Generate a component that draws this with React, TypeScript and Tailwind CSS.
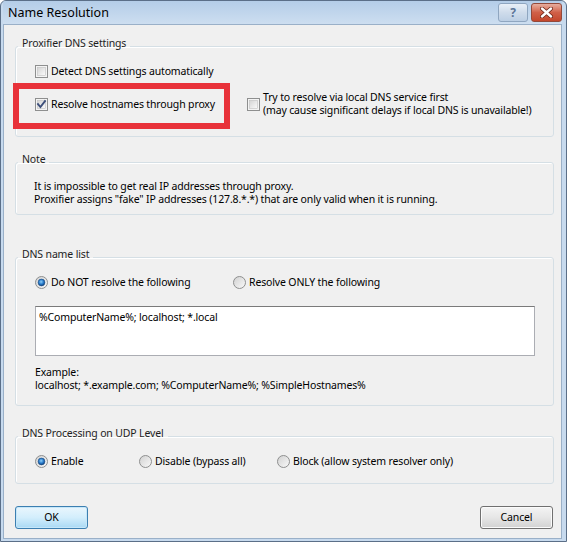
import React from "react";

const font = { fontFamily: '"Noto Sans", "Open Sans", Arial, sans-serif' };

function CheckBox({ checked = false }: { checked?: boolean }) {
  return (
    <svg width="13" height="13" viewBox="0 0 13 13" className="shrink-0">
      <defs>
        <linearGradient id="cbfill" x1="0" y1="0" x2="1" y2="1">
          <stop offset="0" stopColor="#d4d4d4" />
          <stop offset="1" stopColor="#fbfbfb" />
        </linearGradient>
      </defs>
      <rect x="0.5" y="0.5" width="12" height="12" fill="#f4f4f4" stroke="#8e8f8f" />
      <rect x="2.5" y="2.5" width="8" height="8" fill="url(#cbfill)" stroke="#c0c0c0" strokeWidth="0.6" />
      {checked && (
        <path d="M3 6.2 L5.4 9 L10 3.2" fill="none" stroke="#3d4f7a" strokeWidth="1.9" strokeLinecap="square" />
      )}
    </svg>
  );
}

function Radio({ checked = false }: { checked?: boolean }) {
  return (
    <svg width="13" height="13" viewBox="0 0 13 13" className="shrink-0">
      <defs>
        <linearGradient id="rdring" x1="0" y1="0" x2="1" y2="1">
          <stop offset="0" stopColor="#d0d0d0" />
          <stop offset="1" stopColor="#fafafa" />
        </linearGradient>
        <radialGradient id="rddot" cx="0.45" cy="0.4" r="0.6">
          <stop offset="0" stopColor="#8fd0f7" />
          <stop offset="0.55" stopColor="#2c7fcf" />
          <stop offset="1" stopColor="#0d3f7a" />
        </radialGradient>
      </defs>
      <circle cx="6.5" cy="6.5" r="6" fill="url(#rdring)" stroke="#8e8f8f" />
      {checked && <circle cx="6.5" cy="6.5" r="3.4" fill="url(#rddot)" stroke="#1f4f86" strokeWidth="0.6" />}
    </svg>
  );
}

function Group({
  title,
  className,
  children,
}: {
  title: string;
  className: string;
  children: React.ReactNode;
}) {
  return (
    <fieldset
      className={`ml-[11px] mr-[7px] rounded-[3px] border border-[#d5dfe5] shadow-[inset_1px_1px_0_#ffffff] ${className}`}
    >
      <legend className="ml-[2px] px-[4px] pb-[6px] leading-[15px] text-[#1e1e1e]">{title}</legend>
      {children}
    </fieldset>
  );
}

export default function App() {
  return (
    <div
      style={font}
      className="flex h-[542px] w-[567px] flex-col overflow-hidden rounded-t-[6px] border border-[#5b6f88] bg-[#c7daee] pb-[2px] pl-[2px] pr-[4px]"
    >
      {/* title bar */}
      <div className="flex h-[23px] shrink-0 items-start bg-gradient-to-b from-[#b4cde8] to-[#cddef0]">
        <span className="ml-[5px] mt-[3px] text-[12.5px] leading-[17px] text-black">Name Resolution</span>
        <div className="ml-auto mt-[2px] flex gap-[3px]">
          <div className="flex h-[19px] w-[30px] items-center justify-center rounded-[3px] border border-[#8fa6c0] bg-gradient-to-b from-[#e9f0f8] via-[#cfdceb] to-[#bccfe4] text-[12px] font-bold text-[#5b7598]">
            ?
          </div>
          <div className="flex h-[19px] w-[31px] items-center justify-center rounded-[3px] border border-[#93493a] bg-gradient-to-b from-[#e6ad9e] via-[#d06048] to-[#c4472c]">
            <svg width="13" height="11" viewBox="0 0 13 11">
              <path d="M2 1.5 L11 9.5 M11 1.5 L2 9.5" stroke="#6a2517" strokeWidth="4" strokeLinecap="round" />
              <path d="M2 1.5 L11 9.5 M11 1.5 L2 9.5" stroke="#ffffff" strokeWidth="2.4" strokeLinecap="round" />
            </svg>
          </div>
        </div>
      </div>

      {/* client area */}
      <div className="flex flex-1 flex-col border border-[#9ab0c8] bg-[#f0f0f0] text-[10.5px] leading-[15px] tracking-[-0.15px] text-black">
        <Group title="Proxifier DNS settings" className="mt-[11px] h-[101px]">
          <div className="pl-[19px]">
            <div className="mt-[6px] flex h-[16px] items-center gap-[3px]">
              <CheckBox />
              <span>Detect DNS settings automatically</span>
            </div>
            <div className="mt-[12px] flex h-[26px] items-center">
              <div className="relative flex w-[212px] items-center gap-[3px]">
                <div className="absolute left-[-22px] top-[-14px] h-[46px] w-[217px] border-[6px] border-[#e8323a]" />
                <CheckBox checked />
                <span>Resolve hostnames through proxy</span>
              </div>
              <div className="flex items-center gap-[3px]">
                <CheckBox />
                <span className="whitespace-nowrap leading-[13px]">
                  Try to resolve via local DNS service first
                  <br />
                  (may cause significant delays if local DNS is unavailable!)
                </span>
              </div>
            </div>
          </div>
        </Group>

        <Group title="Note" className="mt-[15px] h-[63px]">
          <p className="mt-[7px] pl-[18px] leading-[13px]">
            It is impossible to get real IP addresses through proxy.
            <br />
            Proxifier assigns "fake" IP addresses (127.8.*.*) that are only valid when it is running.
          </p>
        </Group>

        <Group title="DNS name list" className="mt-[32px] h-[159px]">
          <div className="pl-[19px]">
            <div className="mt-[6px] flex h-[16px] items-center">
              <div className="flex w-[198px] items-center gap-[3px]">
                <Radio checked />
                <span>Do NOT resolve the following</span>
              </div>
              <div className="flex items-center gap-[3px]">
                <Radio />
                <span>Resolve ONLY the following</span>
              </div>
            </div>
            <div className="mt-[16px] h-[50px] w-[500px] border border-[#abadb3] border-t-[#7a7a7a] bg-white px-[3px] pt-[3px]">
              %ComputerName%; localhost; *.local
            </div>
            <p className="mt-[10px] leading-[13px]">
              Example:
              <br />
              localhost; *.example.com; %ComputerName%; %SimpleHostnames%
            </p>
          </div>
        </Group>

        <Group title="DNS Processing on UDP Level" className="mt-[20px] h-[58px]">
          <div className="mt-[6px] flex h-[16px] items-center pl-[19px]">
            <div className="flex w-[104px] items-center gap-[3px]">
              <Radio checked />
              <span>Enable</span>
            </div>
            <div className="flex w-[138px] items-center gap-[3px]">
              <Radio />
              <span>Disable (bypass all)</span>
            </div>
            <div className="flex items-center gap-[3px]">
              <Radio />
              <span>Block (allow system resolver only)</span>
            </div>
          </div>
        </Group>

        <div className="ml-[11px] mr-[8px] mt-[22px] flex justify-between">
          <button className="h-[23px] w-[73px] rounded-[3px] border border-[#3c7fb1] bg-gradient-to-b from-[#eaf6fd] via-[#d3eefc] to-[#a9d9f4] shadow-[inset_0_0_0_1px_#c6e7f9] text-black">
            OK
          </button>
          <button className="h-[23px] w-[73px] rounded-[3px] border border-[#707070] bg-gradient-to-b from-[#f4f4f4] via-[#e6e6e6] to-[#d2d2d2] shadow-[inset_0_0_0_1px_#fbfbfb] text-black">
            Cancel
          </button>
        </div>
      </div>
    </div>
  );
}
